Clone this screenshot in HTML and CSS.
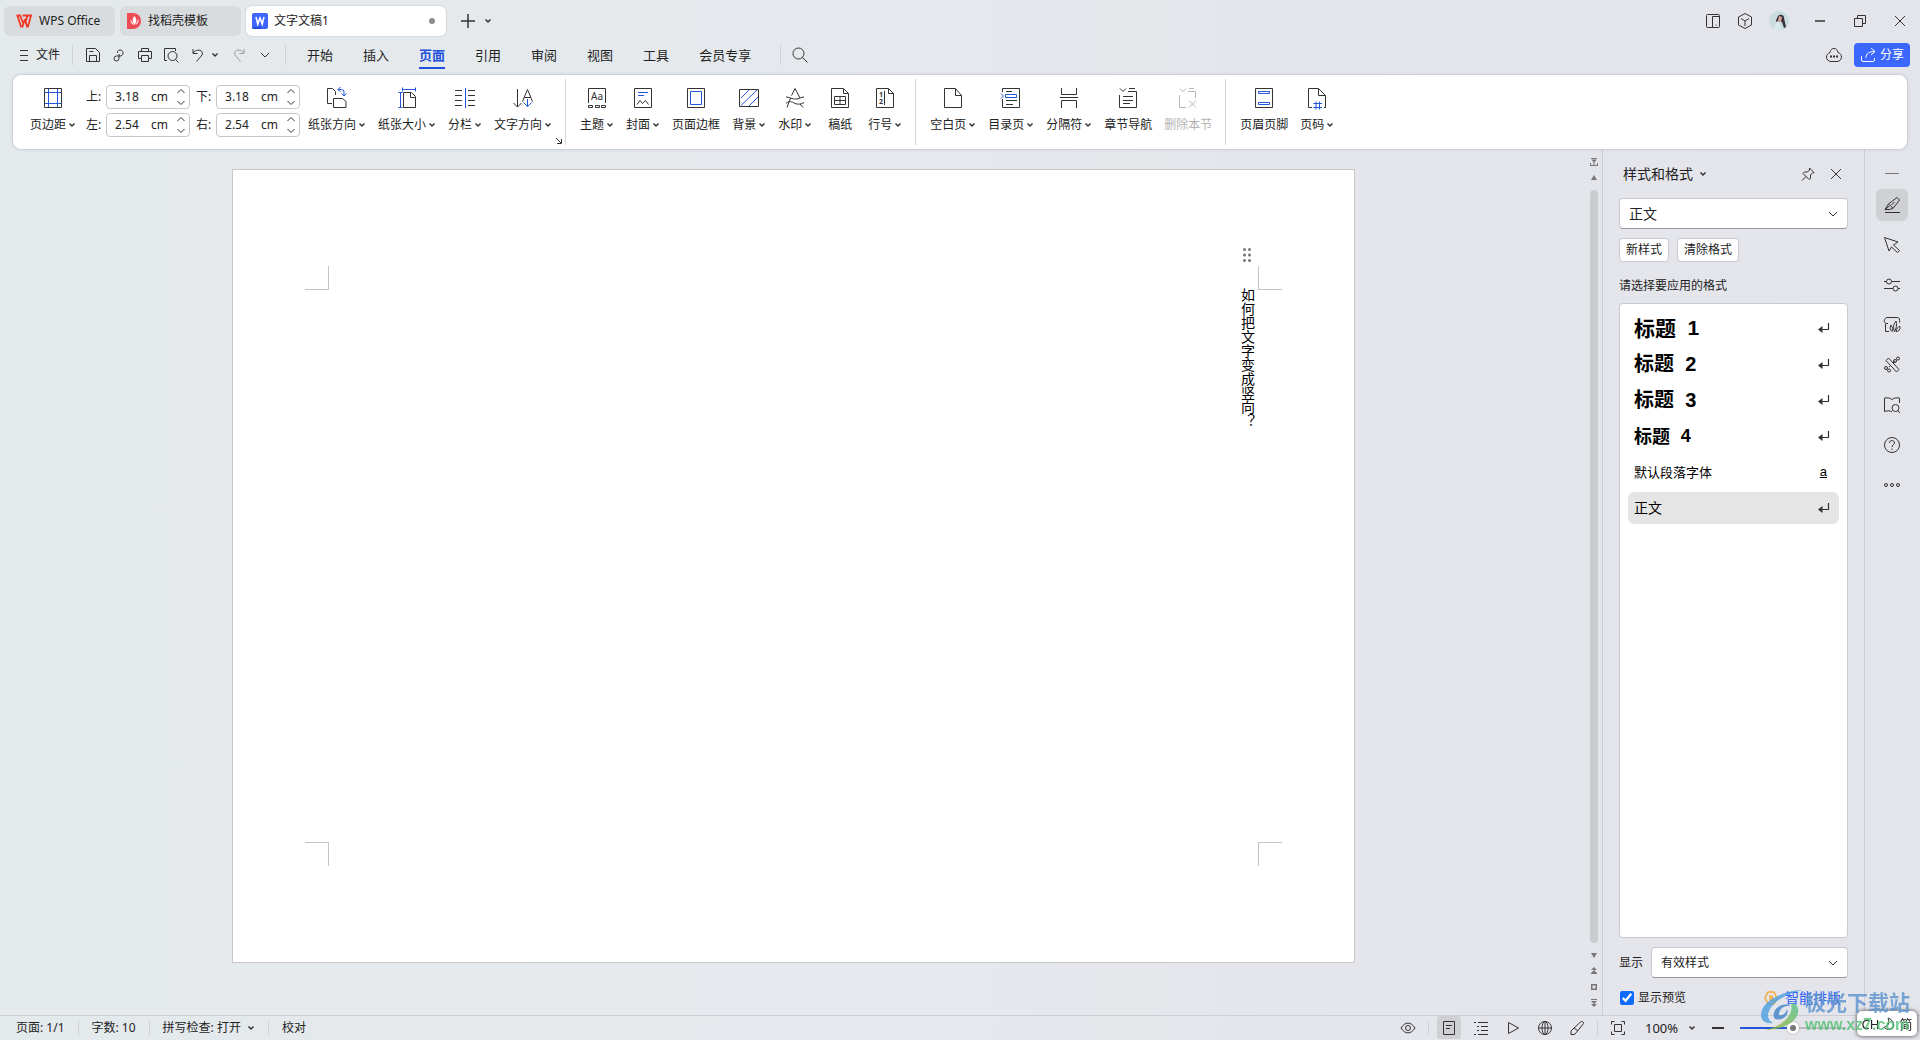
FILE: index.html
```html
<!DOCTYPE html>
<html lang="zh-CN">
<head>
<meta charset="utf-8">
<title>文字文稿1 - WPS Office</title>
<link rel="stylesheet" href="styles.css">
</head>
<body>
<svg class="defs" aria-hidden="true">
  <symbol id="chev" viewBox="0 0 8 8"><path d="M1.500 2.500 4 5l2.500-2.500" stroke-width="1.500"/></symbol>
  <symbol id="chev-lg" viewBox="0 0 12 12"><path d="M2 4l4 4 4-4"/></symbol>
  <symbol id="ret" viewBox="0 0 12 12"><path d="M10.500 1v6.500H3" stroke-width="1.200"/><path class="solid" d="M0 7.500 4.500 4v7z"/></symbol>
</svg>

<header class="titlebar">
  <nav class="doc-tabs">
    <button class="doc-tab home"><svg class="ic" width="16" height="14" viewBox="0 0 16 14"><path d="M.5 1.500h3.500L7.500 10M1.500 2 5 12.500h1.500L9 5M6.500 1.500h5M9 5l2 7.500h1L15 1.500h-3.500L9.500 8" stroke="#f03a26" stroke-width="1.800"/></svg>WPS Office</button>
    <button class="doc-tab docer"><svg width="14" height="16" viewBox="0 0 14 16"><path d="M0 0h6a8 8 0 0 1 0 16H0z" fill="#ee4b55"/><path d="M7.500 3c-2.500 2.500-2.500 5 0 9 2.500-3 2.500-6 0-9zM3.500 6.500c0 3 1 4.500 3.500 5.500M11.500 6c.5 3-1 5-3 6" fill="#fff"/></svg>找稻壳模板</button>
    <button class="doc-tab current"><svg width="16" height="16" viewBox="0 0 16 16"><rect width="16" height="16" rx="2" fill="#3f66fb"/><path d="M0 14h9v2H2a2 2 0 0 1-2-2z" fill="#1f49df"/><path d="M4 4l1.800 7L8 5l2.200 6L12 4" fill="none" stroke="#fff" stroke-width="1.600"/></svg><span class="grow">文字文稿1</span><i class="dot"></i></button>
  </nav>
  <button class="bare new-tab" aria-label="新建"><svg class="ic" width="16" height="16" viewBox="0 0 16 16"><path d="M8 1v14M1 8h14" stroke-width="1.500"/></svg></button>
  <button class="bare" aria-label="标签列表"><svg class="ic" width="8" height="8"><use href="#chev"/></svg></button>
  <div class="window-tools">
    <button class="bare" aria-label="分屏"><svg class="ic" width="16" height="16" viewBox="0 0 16 16"><rect x="1.500" y="1.500" width="13" height="13" rx="1"/><path d="M7.500 14V3.500h7M10.500 12h1"/></svg></button>
    <button class="bare" aria-label="应用"><svg class="ic" width="16" height="16" viewBox="0 0 16 16"><path d="M8 .5l6.500 3.500v8L8 15.500 1.500 12V4zM4 5.500 8 8l4-2.500M8 8v5"/></svg></button>
    <button class="bare avatar" aria-label="账户"><svg width="20" height="20" viewBox="0 0 20 20"><circle cx="10" cy="10" r="10" fill="#c9dce0"/><path d="M9 5c2-2 6-2 6 2l2 9-2 1-2-6-4-1-2 1c0-2 1-4 2-6z" fill="#38303d"/><path d="M10 5l3 1-1 5-3-1z" fill="#d8a69d"/><path d="M5 19c0-5 2-8 5-8l3 8z" fill="#dbeaec"/></svg></button>
    <button class="bare win" aria-label="最小化"><svg class="ic" width="14" height="14" viewBox="0 0 14 14"><path d="M2 7h10" stroke-width="1.500"/></svg></button>
    <button class="bare win" aria-label="还原"><svg class="ic" width="14" height="14" viewBox="0 0 14 14"><path d="M1.500 4.500h8v8h-8zM4.500 4.500v-3h8v8h-3"/></svg></button>
    <button class="bare win" aria-label="关闭"><svg class="ic" width="14" height="14" viewBox="0 0 14 14"><path d="M2 2l10 10M12 2 2 12"/></svg></button>
  </div>
</header>

<div class="menubar">
  <button class="bare file"><svg class="ic" width="10" height="12" viewBox="0 0 10 12"><path d="M1 1.500h8M1 6.500h8M1 11.500h8"/></svg>文件</button>
  <i class="rule"></i>
  <div class="quick">
    <button class="bare" aria-label="保存"><svg class="ic" width="16" height="16" viewBox="0 0 16 16"><path d="M1.500 1.500h9l4 4v9h-13zM4.500 14V8.500h7V14M4.500 4.500h4"/></svg></button>
    <button class="bare" aria-label="输出"><svg class="ic" width="16" height="16" viewBox="0 0 16 16"><path d="M6.500 6V4.500a3 3 0 1 1 3 4.500H5.500a2.500 2.500 0 1 0 2.500 2.500V7"/></svg></button>
    <button class="bare" aria-label="打印"><svg class="ic" width="16" height="16" viewBox="0 0 16 16"><path d="M4.500 5V1.500h7V5M4 11.500H1.500v-7h13v7H12M4.500 8.500h7v6h-7z"/></svg></button>
    <button class="bare" aria-label="打印预览"><svg class="ic" width="16" height="16" viewBox="0 0 16 16"><path d="M4 13.500H1.500v-12h11V4M12.500 12.500l3 3"/><circle cx="9.500" cy="9" r="4.500"/></svg></button>
    <button class="bare undo" aria-label="撤销"><svg class="ic" width="16" height="16" viewBox="0 0 16 16"><path d="M3 2v4.500h4.500M3 6C7 1 14 3 12 8l-5.500 6.500"/></svg></button>
    <button class="bare" aria-label="撤销列表"><svg class="ic" width="8" height="8"><use href="#chev"/></svg></button>
    <button class="bare redo" aria-label="恢复" disabled><svg class="ic" width="16" height="16" viewBox="0 0 16 16"><path d="M13 2v4.500H8.500M13 6C9 1 2 3 4 8l5.500 6.500"/></svg></button>
    <button class="bare more" aria-label="更多"><svg class="ic" width="12" height="12"><use href="#chev-lg"/></svg></button>
  </div>
  <i class="rule"></i>
  <nav class="menu">
    <a href="#">开始</a><a href="#">插入</a><a href="#" class="active">页面</a><a href="#">引用</a><a href="#">审阅</a><a href="#">视图</a><a href="#">工具</a><a href="#">会员专享</a>
  </nav>
  <i class="rule"></i>
  <button class="bare search" aria-label="搜索"><svg class="ic" width="18" height="18" viewBox="0 0 18 18"><circle cx="7.500" cy="7.500" r="5.500"/><path d="M11.500 11.500l5 5"/></svg></button>
  <div class="menubar-end">
    <button class="bare" aria-label="云状态"><svg class="ic" width="18" height="16" viewBox="0 0 18 16"><path d="M5 5.500C5.500 2.500 7 1.500 9 1.500s3.500 1 4 4c2.500 1 3.500 2.500 3.500 4.500 0 2.500-2 4.500-4.500 4.500H6c-2.500 0-4.500-2-4.500-4.500 0-2 1-3.500 3.500-4.500z"/><path d="M5 9.500h2M8 9.500h2M11 9.500h2" stroke-width="2"/></svg></button>
    <button class="share"><svg class="ic" width="16" height="16" viewBox="0 0 16 16"><path d="M11 1l4 3.500-4 3.500M15 4.500c-6 0-9 2-9 6.500M1.500 9v4q0 1.500 1.500 1.500h10q1.500 0 1.500-1.500v-2"/></svg>分享</button>
  </div>
</div>

<section class="ribbon">
  <div class="group first">
    <button class="tool"><svg class="ic" width="24" height="24" viewBox="0 0 24 24"><path d="M3.500 2.500h17v19h-17z"/><path class="blue" d="M7.500 3v18M16.500 3v18M4 6.500h16M4 17.500h16"/></svg><span>页边距<svg class="ic" width="8" height="8"><use href="#chev"/></svg></span></button>
    <div class="margins">
      <label for="mt">上:</label><div class="field"><input id="mt" value="3.18"><span>cm</span><svg class="ic" width="10" height="20" viewBox="0 0 10 20"><path d="M1.500 6 5 2.500 8.500 6M1.500 14 5 17.500 8.500 14"/></svg></div>
      <label for="mb">下:</label><div class="field"><input id="mb" value="3.18"><span>cm</span><svg class="ic" width="10" height="20" viewBox="0 0 10 20"><path d="M1.500 6 5 2.500 8.500 6M1.500 14 5 17.500 8.500 14"/></svg></div>
      <label for="ml">左:</label><div class="field"><input id="ml" value="2.54"><span>cm</span><svg class="ic" width="10" height="20" viewBox="0 0 10 20"><path d="M1.500 6 5 2.500 8.500 6M1.500 14 5 17.500 8.500 14"/></svg></div>
      <label for="mr">右:</label><div class="field"><input id="mr" value="2.54"><span>cm</span><svg class="ic" width="10" height="20" viewBox="0 0 10 20"><path d="M1.500 6 5 2.500 8.500 6M1.500 14 5 17.500 8.500 14"/></svg></div>
    </div>
    <button class="tool"><svg class="ic" width="24" height="24" viewBox="0 0 24 24"><path d="M7 17.500H2.500v-15h5l3 3V9M8.500 12.500h9l3.500 3v6H8.500z"/><path class="blue" d="M15.500 1l-2.500 2.500 2.500 2.500M13 3.500h3.500q2.500 0 2.500 2.500v4M16.500 7.500 19 10l2.500-2.500"/></svg><span>纸张方向<svg class="ic" width="8" height="8"><use href="#chev"/></svg></span></button>
    <button class="tool"><svg class="ic" width="24" height="24" viewBox="0 0 24 24"><path d="M8.500 6.500h8l4 4v11h-12zM15.500 7v4.500h5"/><path class="blue" d="M7.500 3.500h13M7.500 1.500v4M20.500 1.500v4M5.500 6.500v15M3.500 6.500h4M3.500 21.500h4"/></svg><span>纸张大小<svg class="ic" width="8" height="8"><use href="#chev"/></svg></span></button>
    <button class="tool"><svg class="ic" width="24" height="24" viewBox="0 0 24 24"><path d="M2 4.500h7M2 9.500h7M2 14.500h7M2 19.500h7M15 4.500h7M15 9.500h7M15 14.500h7M15 19.500h7"/><path class="blue" d="M12.500 2v20"/></svg><span>分栏<svg class="ic" width="8" height="8"><use href="#chev"/></svg></span></button>
    <button class="tool"><svg class="ic" width="24" height="24" viewBox="0 0 24 24"><path d="M6.500 3v18M2.500 17l4 4 4-4M11.500 15.500l5-12 5 12M13 11.500h7"/><path class="blue" d="M16.500 13v7.500M12.500 16.500l4 4 4-4"/></svg><span>文字方向<svg class="ic" width="8" height="8"><use href="#chev"/></svg></span></button>
    <svg class="ic launcher" width="8" height="8" viewBox="0 0 8 8"><path d="M1 1l5 5M6.500 2v4.500H2"/></svg>
  </div>
  <div class="group">
    <button class="tool"><svg class="ic" width="24" height="24" viewBox="0 0 24 24"><path d="M20.500 17V2.500h-17V17M3.500 19.500h4v2h-4zM10.500 19.500h4v2h-4zM16.500 19.500h4v2h-4z"/><text x="6" y="14">Aa</text></svg><span>主题<svg class="ic" width="8" height="8"><use href="#chev"/></svg></span></button>
    <button class="tool"><svg class="ic" width="24" height="24" viewBox="0 0 24 24"><path d="M3.500 2.500h17v19h-17zM6 18.500l3-4 2.500 3 3-3 3 4"/><path class="blue" d="M7 6.500h10M7 9.500h6"/></svg><span>封面<svg class="ic" width="8" height="8"><use href="#chev"/></svg></span></button>
    <button class="tool"><svg class="ic" width="24" height="24" viewBox="0 0 24 24"><path d="M3.500 2.500h17v19h-17z"/><path class="blue" d="M6.500 5.500h11v13h-11z"/></svg><span>页面边框</span></button>
    <button class="tool"><svg class="ic" width="24" height="24" viewBox="0 0 24 24"><path d="M2.500 3.500h19v17h-19z"/><path class="blue" d="M4 12l8-8M4 19.500 20 4M12 20l9-9"/></svg><span>背景<svg class="ic" width="8" height="8"><use href="#chev"/></svg></span></button>
    <button class="tool"><svg class="ic" width="24" height="24" viewBox="0 0 24 24"><path d="M8.500 9.500 12 2.500l5 9.500M3 11c4 0 6 2.500 10 2 3 0 5-2 8-2M3 17.500c3-3 6-2 9 0 3 1 6 1 9-1M7.500 12 4 21.500M17 18l3 3.500"/></svg><span>水印<svg class="ic" width="8" height="8"><use href="#chev"/></svg></span></button>
    <button class="tool"><svg class="ic" width="24" height="24" viewBox="0 0 24 24"><path d="M3.500 2.500h12l5 5v14h-17zM15.500 3v4.500h5M6.500 10.500h11v8h-11zM12 11v7M7 14.500h10"/></svg><span>稿纸</span></button>
    <button class="tool"><svg class="ic" width="24" height="24" viewBox="0 0 24 24"><path d="M3.500 2.500h12l5 5v14h-17zM15.500 3v4.500h5M11.500 5v14"/><text class="tiny" x="6" y="11">1</text><text class="tiny" x="6" y="18">2</text></svg><span>行号<svg class="ic" width="8" height="8"><use href="#chev"/></svg></span></button>
  </div>
  <div class="group">
    <button class="tool"><svg class="ic" width="24" height="24" viewBox="0 0 24 24"><path d="M3.500 2.500h11l6 7v12h-17zM14.500 3v6.500h6"/></svg><span>空白页<svg class="ic" width="8" height="8"><use href="#chev"/></svg></span></button>
    <button class="tool"><svg class="ic" width="24" height="24" viewBox="0 0 24 24"><path d="M3.500 6V2.500h17v19h-17V13M7 5.500h6M7 14.500h11M7 18.500h7"/><path class="blue" d="M6.500 8.500h11v3h-11zM2 7.500 4.500 10 2 12.500"/></svg><span>目录页<svg class="ic" width="8" height="8"><use href="#chev"/></svg></span></button>
    <button class="tool"><svg class="ic" width="24" height="24" viewBox="0 0 24 24"><path d="M4.500 2v6.500h15V2M3 11.500h18M4.500 22v-7.500h15V22"/></svg><span>分隔符<svg class="ic" width="8" height="8"><use href="#chev"/></svg></span></button>
    <button class="tool"><svg class="ic" width="24" height="24" viewBox="0 0 24 24"><path d="M3.500 9v12.500h17v-16H12M13 2.500h6M4 2.500 7 5.500l3-3M7 10.500h10M7 14.500h10M7 17.500h7"/></svg><span>章节导航</span></button>
    <button class="tool" disabled><svg class="ic" width="24" height="24" viewBox="0 0 24 24"><path d="M3.500 9v12.500H10M12 5.500h7.500V12M13 2.500h5M4 2.500 7 5.500l3-3M13 14.500l7 7M20 14.500l-7 7"/></svg><span>删除本节</span></button>
  </div>
  <div class="group">
    <button class="tool"><svg class="ic" width="24" height="24" viewBox="0 0 24 24"><path d="M3.500 2.500h17v19h-17z"/><path class="blue" d="M6.500 5.500h11v2h-11zM6.500 16.500h11v2h-11z"/></svg><span>页眉页脚</span></button>
    <button class="tool"><svg class="ic" width="24" height="24" viewBox="0 0 24 24"><path d="M7 21.500H3.500v-19h10l7 7v12H19M13.500 3v6.500h7"/><path class="blue" d="M11 15.500v8M14.500 15.500v8M8.500 17.500H17M8.500 21.500H17"/></svg><span>页码<svg class="ic" width="8" height="8"><use href="#chev"/></svg></span></button>
  </div>
</section>

<main class="work">
  <section class="canvas">
    <article class="paper">
      <i class="mark tl"></i><i class="mark tr"></i><i class="mark bl"></i><i class="mark br"></i>
      <svg class="handle" width="8" height="14" viewBox="0 0 8 14"><g fill="#777"><circle cx="1.500" cy="1.500" r="1.500"/><circle cx="6.500" cy="1.500" r="1.500"/><circle cx="1.500" cy="7" r="1.500"/><circle cx="6.500" cy="7" r="1.500"/><circle cx="1.500" cy="12.500" r="1.500"/><circle cx="6.500" cy="12.500" r="1.500"/></g></svg>
      <p>如何把文字变成竖向？</p>
    </article>
  </section>
  <div class="scroll">
    <svg width="8" height="8" viewBox="0 0 8 8"><path d="M1 0h6v1H1zM4 5 1.500 1.500h5zM0 5h1v2h6V5h1v3H0zM3.500 4h1v3h-1z"/></svg>
    <svg width="8" height="8" viewBox="0 0 8 8"><path d="M4 1l3 5H1z"/></svg>
    <i class="thumb"></i>
    <svg width="8" height="8" viewBox="0 0 8 8"><path d="M4 7 1 2h6z"/></svg>
    <svg width="8" height="8" viewBox="0 0 8 8"><path d="M4 0l3 3H1zM4 3l3 3H1zM1 6h6v1H1z"/></svg>
    <svg width="8" height="8" viewBox="0 0 8 8"><path d="M1 1h6v6H1zm1.500 1.500v3h3v-3z" fill-rule="evenodd"/></svg>
    <svg width="8" height="8" viewBox="0 0 8 8"><path d="M4 8 1 5h6zM4 5 1 2h6zM1 0h6v1H1z"/></svg>
  </div>
  <aside class="panel">
    <div class="panel-head">
      <h2>样式和格式</h2><svg class="ic" width="8" height="8"><use href="#chev"/></svg>
      <button class="bare pin" aria-label="固定"><svg class="ic" width="14" height="14" viewBox="0 0 14 14"><path d="M8.500 1 13 5.500l-1.500.5-2 2v3.500L8 12.500 2 6.500 3.500 5h3l2-2zM5 9.500 1 13.500"/></svg></button>
      <button class="bare" aria-label="关闭窗格"><svg class="ic" width="14" height="14" viewBox="0 0 14 14"><path d="M2 2l10 10M12 2 2 12"/></svg></button>
    </div>
    <div class="pick big"><select aria-label="当前样式"><option>正文</option></select><svg class="ic" width="12" height="12"><use href="#chev-lg"/></svg></div>
    <div class="actions"><button>新样式</button><button>清除格式</button></div>
    <p class="hint">请选择要应用的格式</p>
    <ul class="styles">
      <li class="h1">标题 <b>1</b><svg class="ic" width="12" height="12"><use href="#ret"/></svg></li>
      <li class="h2">标题 <b>2</b><svg class="ic" width="12" height="12"><use href="#ret"/></svg></li>
      <li class="h3">标题 <b>3</b><svg class="ic" width="12" height="12"><use href="#ret"/></svg></li>
      <li class="h4">标题 <b>4</b><svg class="ic" width="12" height="12"><use href="#ret"/></svg></li>
      <li class="char">默认段落字体<u>a</u></li>
      <li class="body on">正文<svg class="ic" width="12" height="12"><use href="#ret"/></svg></li>
    </ul>
    <div class="show-row"><label for="show">显示</label><div class="pick"><select id="show"><option>有效样式</option></select><svg class="ic" width="12" height="12"><use href="#chev-lg"/></svg></div></div>
    <div class="preview-row"><input type="checkbox" id="pv" checked><label for="pv">显示预览</label><a href="#"><svg width="14" height="14" viewBox="0 0 14 14"><path d="M4 1h6l3 6-3 6H4L1 7z" fill="none" stroke="#f3a93c" stroke-width="1.500"/><path d="M9 5H6v2h3v2H5" fill="none" stroke="#f3a93c" stroke-width="1.500"/></svg>智能排版</a></div>
  </aside>
  <nav class="rail">
    <i class="dash"></i>
    <button class="bare on" aria-label="样式"><svg class="ic" width="18" height="18" viewBox="0 0 18 18"><path d="M2 16.500h15M2 13.500l3.500-5.500L14 1.500l2.500 2.500L10 12.500 6 13.500H2L6.500 10M5.500 8 10 12M11.500 6 8.500 9"/></svg></button>
    <button class="bare" aria-label="选择"><svg class="ic" width="18" height="18" viewBox="0 0 18 18"><path d="M1.500 1.500 15 6l-4.500 3 6 5.500-2 2-6-5.500L6 15z"/></svg></button>
    <button class="bare" aria-label="属性"><svg class="ic" width="18" height="18" viewBox="0 0 18 18"><path d="M1 5.500h2.500M8.500 5.500H17M1 12.500h9M15 12.500h2"/><circle cx="6" cy="5.500" r="2.500"/><circle cx="12.500" cy="12.500" r="2.500"/></svg></button>
    <button class="bare" aria-label="素材"><svg class="ic" width="18" height="18" viewBox="0 0 18 18"><path d="M5 7.500c-5 1-5-6 0-6h9c2.500 0 3 2 2.500 5M2.500 8v7.500H6M8 9c-1.500 3-1 5 1 6.500 1-2 1-4-1-6.500zM13 5c-3 4-3 7-1.500 10.500 2-3 2.500-7 1.500-10.500zM17 10.500c-2 0-3.500 2-4 5 2.500 0 4.500-1.500 4-5z"/></svg></button>
    <button class="bare" aria-label="智能工具"><svg class="ic" width="18" height="18" viewBox="0 0 18 18"><path d="M3 4.500 5.500 2 16 13.500 13.500 16zM8 9l-2 2M10 7l2-2"/><circle cx="15" cy="2.500" r="1.500"/><circle cx="12" cy="5" r="1.500"/><circle cx="3" cy="12" r="1.500"/><circle cx="6" cy="14.500" r="1.500"/></svg></button>
    <button class="bare" aria-label="阅读"><svg class="ic" width="18" height="18" viewBox="0 0 18 18"><path d="M9 16c-2-1.500-4-1.500-7.500-.5V2C5 1.500 7 2 9 3.500 11 2 13 1.500 16.500 2v5M15 15l2 2"/><circle cx="12.500" cy="12" r="3.500"/></svg></button>
    <button class="bare" aria-label="帮助"><svg class="ic" width="18" height="18" viewBox="0 0 18 18"><circle cx="9" cy="9" r="7.500"/><path d="M6.500 7c0-3.500 5-3 5 0 0 1.500-2.500 2-2.500 4M9 12.500V14"/></svg></button>
    <button class="bare" aria-label="更多"><svg class="ic" width="18" height="18" viewBox="0 0 18 18"><circle cx="3" cy="9" r="1.500"/><circle cx="9" cy="9" r="1.500"/><circle cx="15" cy="9" r="1.500"/></svg></button>
  </nav>
</main>

<footer class="status">
  <span>页面: 1/1</span><i class="rule"></i><span>字数: 10</span><i class="rule"></i><span class="spell">拼写检查: 打开<svg class="ic" width="8" height="8"><use href="#chev"/></svg></span><i class="rule"></i><span>校对</span>
  <div class="status-end">
    <button class="bare" aria-label="护眼"><svg class="ic" width="16" height="16" viewBox="0 0 16 16"><path d="M1 8c4-6.500 10-6.500 14 0-4 6.500-10 6.500-14 0z"/><circle cx="8" cy="8" r="2.500"/></svg></button>
    <i class="rule"></i>
    <button class="bare on" aria-label="页面视图"><svg class="ic" width="16" height="16" viewBox="0 0 16 16"><path d="M2.500 1.500h11v13h-11zM5 5.500h6M5 8.500h4"/></svg></button>
    <button class="bare" aria-label="大纲"><svg class="ic" width="16" height="16" viewBox="0 0 16 16"><path d="M1 2.500h2M5 2.500h10M4 6.500h2M8 6.500h7M4 10.500h2M8 10.500h7M1 14.500h2M5 14.500h10"/></svg></button>
    <button class="bare" aria-label="播放"><svg class="ic" width="16" height="16" viewBox="0 0 16 16"><path d="M3.500 2.500v11L13.500 8z"/></svg></button>
    <button class="bare" aria-label="Web 版式"><svg class="ic" width="16" height="16" viewBox="0 0 16 16"><circle cx="8" cy="8" r="6.500"/><ellipse cx="8" cy="8" rx="3" ry="6.500"/><path d="M1.500 8h13M8 1.500v13"/></svg></button>
    <button class="bare" aria-label="写作模式"><svg class="ic" width="16" height="16" viewBox="0 0 16 16"><path d="M2 14.500V11l3-3 6.500-6q3-1.500 3 1.500L9 10.500l-3.500 4zM5 8l4 3"/></svg></button>
    <i class="rule"></i>
    <button class="bare fit" aria-label="适合窗口"><svg class="ic" width="16" height="16" viewBox="0 0 16 16"><path d="M1.500 4.500v-3h3M11.500 1.500h3v3M14.500 11.500v3h-3M4.500 14.500h-3v-3M4.500 4.500h7v7h-7z"/></svg></button>
    <span class="pct">100%</span>
    <button class="bare small" aria-label="缩放列表"><svg class="ic" width="8" height="8"><use href="#chev"/></svg></button>
    <button class="bare minus" aria-label="缩小"><svg class="ic" width="12" height="12" viewBox="0 0 12 12"><path d="M0 6h12" stroke-width="2"/></svg></button>
    <input class="zoom" type="range" min="0" max="100" value="50" aria-label="缩放">
  </div>
</footer>

<div class="ime">CH<svg width="12" height="14" viewBox="0 0 12 14"><path d="M5 1c6 2 8 9 2 11-2 1-5 0-6-2 4 0 6-4 4-9z" fill="none" stroke="#333"/></svg>简</div>
<div class="site-mark">
  <svg width="44" height="44" viewBox="0 0 44 44"><defs><linearGradient id="g" x1="1" y1="0" x2="0" y2="1"><stop offset="0" stop-color="#4fc08e"/><stop offset="1" stop-color="#a8b82e"/></linearGradient></defs><path d="M43 1C22 2 2 13 2 26c0 6 5 9 12 8-5-3-6-7-4-12C14 12 28 5 43 1z" fill="#4b9fe0"/><path d="M15 29c-3-9 9-17 17-12-7-1-12 3-12 9 4 1 7-2 8-6 3 6-6 14-13 9z" fill="#3f83c8"/><path d="M32 14c13 1 11 26-26 27 18-4 29-15 26-27z" fill="url(#g)"/></svg>
  <div><strong>极光下载站</strong><span>www.xz7.com</span></div>
</div>
</body>
</html>
```
FILE: styles.css
```css
* { box-sizing: border-box; }
body {
  margin: 0;
  min-height: 100vh;
  display: flex;
  flex-direction: column;
  overflow: hidden;
  background: linear-gradient(90deg, #e4e9ec 0%, #e5e9ed 45%, #e5e6eb 65%, #e4e5eb 100%);
  color: #222;
  font: 12px/18px "Noto Sans", "Noto Sans CJK SC", sans-serif;
}
button, input, select { font: inherit; color: inherit; }
button { border: 0; background: none; padding: 0; }
a { color: inherit; text-decoration: none; }
svg { flex: none; display: block; }
.defs { position: absolute; width: 0; height: 0; }
.ic { fill: none; stroke: #333; stroke-width: 1; }
.ic .solid, .solid { fill: #333; stroke: none; }
.ic .blue { stroke: #2456dc; }
.ic text { font: 10px/1 "Noto Sans", sans-serif; fill: #333; stroke: none; }
.ic text.tiny { font-size: 7px; font-weight: 700; }
.bare { display: flex; align-items: center; justify-content: center; }
.rule { width: 1px; height: 20px; background: #cdd0d4; flex: none; }

.titlebar { display: flex; align-items: center; height: 40px; padding: 2px 4px 0 4px; }
.doc-tabs { display: flex; gap: 5px; margin-right: 14px; }
.doc-tab { display: flex; align-items: center; height: 30px; border-radius: 6px; background: #d9dcde; }
.home { width: 111px; padding-left: 12px; gap: 7px; }
.docer { width: 121px; padding-left: 7px; gap: 7px; }
.current { width: 200px; padding: 0 11px 0 6px; gap: 6px; background: #fff; box-shadow: 0 0 2px #b4b8bc; text-align: left; }
.grow { flex: 1; }
.dot { width: 6px; height: 6px; border-radius: 50%; background: #8c8c8c; }
.new-tab { margin-right: 8px; }
.window-tools { margin-left: auto; display: flex; align-items: center; }
.window-tools .bare { width: 32px; height: 30px; }
.window-tools .avatar { width: 36px; margin-right: 3px; }
.window-tools .win { width: 40px; }
.window-tools .win:last-child { width: 32px; margin-left: 4px; }

.menubar { display: flex; align-items: center; height: 30px; padding: 0 10px 0 19px; }
.file { gap: 7px; margin-right: 12px; }
.quick { display: flex; align-items: center; gap: 10px; padding: 0 14px 0 12px; }
.quick .undo { margin: 0 -5px 0 1px; }
.quick .redo { margin-left: 2px; opacity: .4; }
.quick .more { margin-left: 2px; }
.menu { display: flex; gap: 30px; margin: 0 29px 0 21px; font-size: 13px; }
.menu a { position: relative; line-height: 28px; }
.menu .active { color: #2050dc; font-weight: 700; }
.menu .active::after { content: ""; position: absolute; left: 0; right: 0; bottom: 0; height: 2px; background: #2050dc; }
.search { margin-left: 10px; }
.menubar-end { margin-left: auto; display: flex; gap: 11px; }
.share { display: flex; align-items: center; gap: 4px; height: 24px; padding: 0 6px; border-radius: 4px; background: #3b67ff; color: #fff; }
.share .ic { stroke: #fff; }

.ribbon { display: flex; margin: 5px 13px 0; height: 74px; border-radius: 8px; background: #fff; box-shadow: 0 0 3px #aaaeb4; position: relative; }
.group { position: relative; display: flex; align-items: flex-start; gap: 12px; margin: 4px 0; padding: 7px 13px 0 14px; border-right: 1px solid #d4d4d4; }
.group:last-child { border: 0; }
.group.first { padding-left: 17px; }
.tool { display: flex; flex-direction: column; align-items: center; gap: 6px; min-width: 32px; }
.tool span { display: flex; align-items: center; gap: 2px; white-space: nowrap; }
.tool:disabled { opacity: .35; }
.margins { display: grid; grid-template-columns: auto 84px auto 84px; align-items: center; column-gap: 6px; row-gap: 4px; margin: -1px -4px 0 -2px; }
.margins label { width: 14px; }
.field { display: flex; align-items: center; height: 24px; padding: 0 3px 0 8px; border: 1px solid #c4c6ca; border-radius: 4px; }
.field input { width: 36px; padding: 0; border: 0; outline: 0; background: none; }
.field span { flex: 1; }
.launcher { position: absolute; right: 2px; bottom: 0; }

.work { flex: 1; display: flex; }
.canvas { flex: 1; display: flex; justify-content: center; align-items: flex-start; padding-top: 20px; }
.paper { position: relative; width: 1123px; height: 794px; padding: 118px 96px; background: #fff; border: 1px solid #c8c8c8; }
.paper p { margin: 0 0 0 auto; writing-mode: vertical-rl; font-size: 14px; line-height: 22px; height: 150px; width: 22px; color: #000; }
.mark { position: absolute; width: 24px; height: 24px; border: 0 solid #c4c4c4; }
.tl { left: 72px; top: 96px; border-width: 0 1px 1px 0; }
.tr { right: 72px; top: 96px; border-width: 0 0 1px 1px; }
.bl { left: 72px; bottom: 96px; border-width: 1px 1px 0 0; }
.br { right: 72px; bottom: 96px; border-width: 1px 0 0 1px; }
.handle { position: absolute; right: 103px; top: 78px; }
.scroll { width: 15px; display: flex; flex-direction: column; align-items: center; gap: 8px; padding: 9px 1px 8px 0; fill: #777; }
.thumb { flex: 1; width: 8px; border-radius: 4px; background: #cbccd0; }

.panel { width: 262px; display: flex; flex-direction: column; padding: 14px 16px 6px; border-left: 1px solid #cdced3; }
.panel-head { display: flex; align-items: center; gap: 6px; height: 22px; padding: 0 5px 0 4px; }
h2 { margin: 0; font-size: 14px; font-weight: 400; }
.pin { margin: 0 8px 0 auto; }
.pick { position: relative; height: 31px; flex: 1; }
.pick select { appearance: none; width: 100%; height: 100%; padding: 0 9px; border: 1px solid #c9cacf; border-bottom-color: #96979c; border-radius: 4px; background: #fff; }
.pick svg { position: absolute; right: 9px; top: 10px; }
.big { flex: none; margin-top: 13px; font-size: 14px; }
.actions { display: flex; gap: 8px; margin-top: 9px; }
.actions button { height: 24px; padding: 0 6px; border: 1px solid #c9cacf; border-radius: 4px; background: #fff; }
.hint { margin: 15px 0 8px; }
.styles { flex: 1; margin: 0; padding: 8px; list-style: none; border: 1px solid #c9cacf; border-radius: 4px; background: #fff; color: #000; }
.styles li { display: flex; align-items: center; height: 32px; margin-bottom: 4px; padding: 0 9px 0 6px; border-radius: 6px; font-weight: 700; white-space: pre; }
.styles svg, .styles u { margin-left: auto; }
.styles u { font: 13px/18px "Liberation Sans", sans-serif; margin-right: 3px; }
.styles b { margin-left: 6px; font-family: "Liberation Sans", sans-serif; }
.styles .h1 { font-size: 21px; }
.styles .h2 { font-size: 20px; }
.styles .h3 { font-size: 20px; }
.styles .h4 { font-size: 18px; }
.styles .char { font-size: 13px; font-weight: 400; }
.styles .body { font-size: 14px; font-weight: 400; }
.styles .on { background: #e5e5e5; }
.show-row { display: flex; align-items: center; gap: 8px; margin-top: 9px; }
.preview-row { display: flex; align-items: center; gap: 4px; height: 22px; margin-top: 9px; }
.preview-row input { width: 14px; height: 14px; margin: 0 0 0 1px; accent-color: #0f6cff; }
.preview-row a { display: flex; align-items: center; gap: 7px; margin: 0 7px 0 auto; font-size: 14px; color: #2f62f0; }
.rail { width: 56px; display: flex; flex-direction: column; align-items: center; gap: 8px; padding: 24px 2px 0 0; border-left: 1px solid #cdced3; }
.dash { width: 14px; height: 1px; margin-bottom: 7px; background: #777; }
.rail .bare { width: 32px; height: 32px; border-radius: 6px; }
.rail .on { background: #cfd0d4; }

.status { display: flex; align-items: center; gap: 13px; height: 25px; padding: 0 0 1px 16px; border-top: 1px solid #cdced3; }
.status .rule { height: 14px; }
.spell { display: flex; align-items: center; gap: 6px; }
.status-end { display: flex; align-items: center; gap: 8px; margin-left: auto; padding-right: 74px; }
.status-end .bare { width: 24px; height: 23px; border-radius: 3px; }
.status-end .on { background: #cfd0d4; }
.pct { font-size: 13px; width: 35px; margin-left: 7px; }
.status-end .small { width: 8px; }
.status-end .minus { width: 12px; margin: 0 8px; }
.zoom { appearance: none; width: 106px; height: 14px; margin: 0; background: linear-gradient(90deg, #2456dc 50%, #b9babf 50%) center / 100% 2px no-repeat; }
.zoom::-webkit-slider-thumb { appearance: none; width: 12px; height: 12px; border: 3px solid #fff; border-radius: 50%; background: #777; box-shadow: 0 0 2px #999; }

.site-mark { position: fixed; right: 10px; bottom: 5px; display: flex; gap: 2px; opacity: .8; pointer-events: none; }
.site-mark div { display: flex; flex-direction: column; }
.site-mark strong { font-size: 21px; line-height: 26px; color: #5b93cf; }
.site-mark span { font: 700 16px/20px "Liberation Sans", sans-serif; color: #52bf74; }
.ime { position: fixed; right: 3px; bottom: 4px; display: flex; align-items: center; justify-content: center; gap: 4px; width: 60px; height: 25px; border-radius: 5px; background: #fff; box-shadow: 0 0 4px #333; font-size: 13px; }
```
